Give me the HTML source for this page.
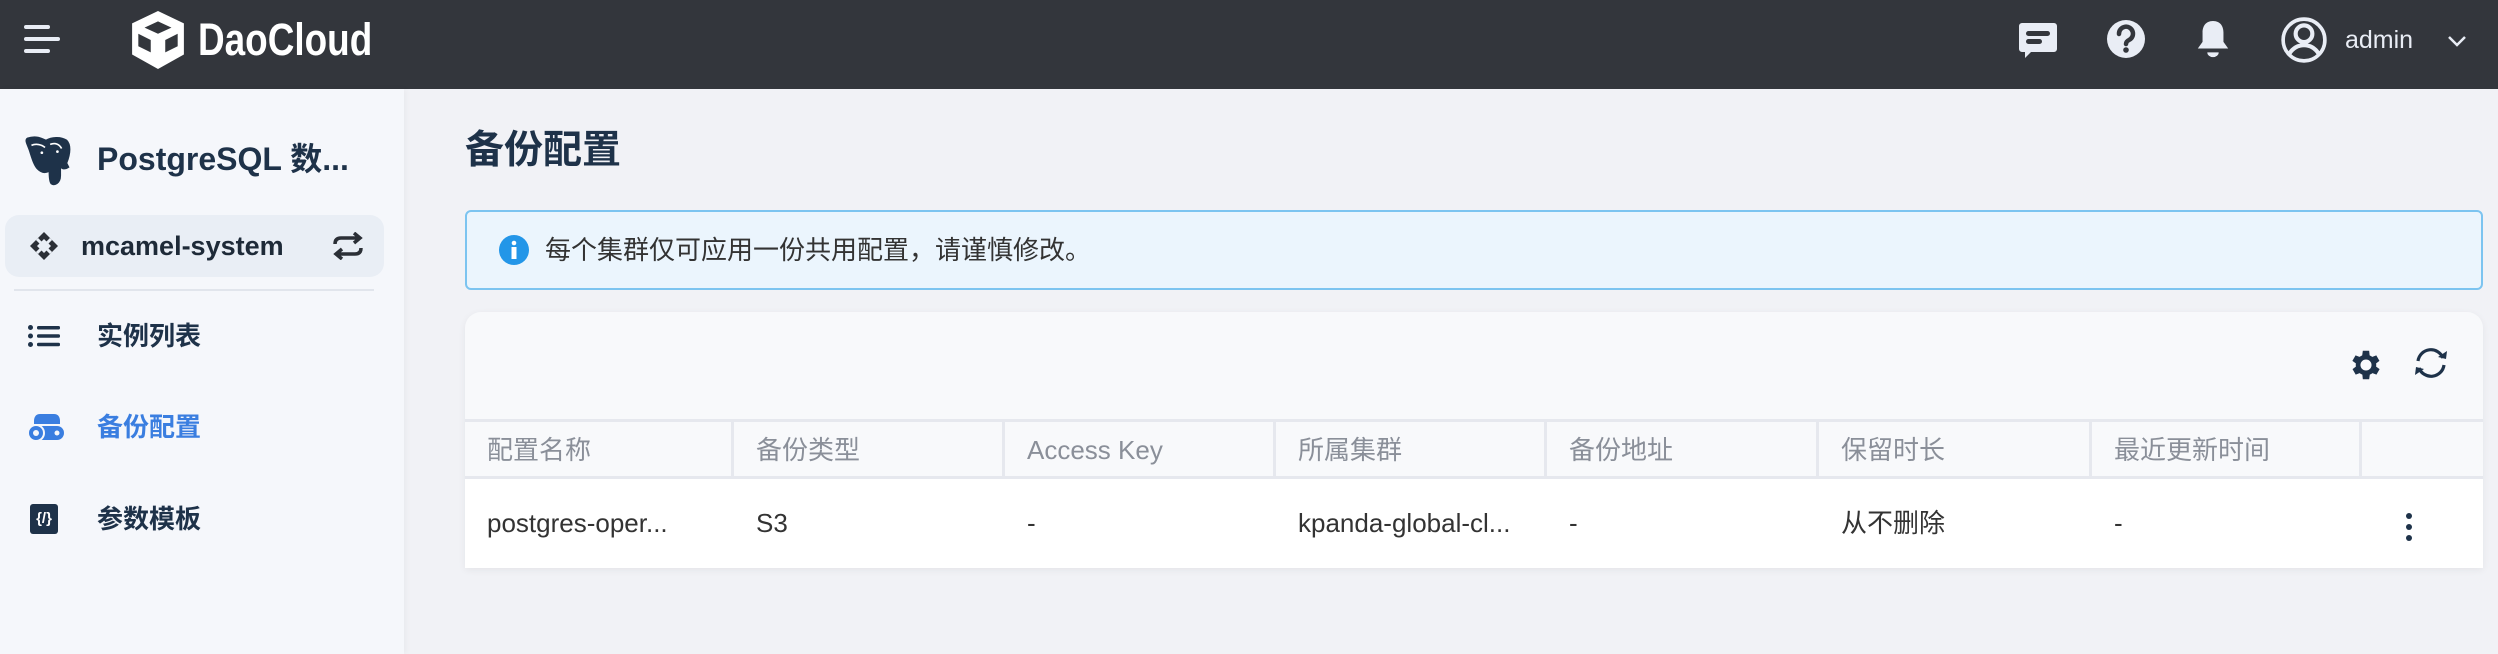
<!DOCTYPE html>
<html><head><meta charset="utf-8"><style>
*{box-sizing:border-box;margin:0;padding:0}
body{width:2498px;height:654px;overflow:hidden;background:#f1f2f6;font-family:"Liberation Sans","Noto Sans CJK SC",sans-serif;position:relative}
.abs{position:absolute}
.hdr{left:0;top:0;width:2498px;height:89px;background:#33363c}
.side{left:0;top:89px;width:404px;height:565px;background:#f5f7fb;box-shadow:2px 0 6px rgba(0,0,0,.04)}
.t{white-space:nowrap;line-height:1}
.card{left:465px;top:312px;width:2018px;height:256px;background:#f8f9fb;border-radius:16px 16px 0 0;box-shadow:0 2px 8px rgba(0,0,0,.06);overflow:hidden}
.th{top:107px;height:60px;border-top:3px solid #e6e8ee;border-bottom:3px solid #e6e8ee}
.col{position:absolute;top:0;height:100%;border-left:3px solid #e6e8ee}
</style></head><body>
<div class="abs hdr"></div>
<div class="abs" style="left:24px;top:25px;width:26px;height:4px;background:#e9edf5;border-radius:2px"></div>
<div class="abs" style="left:24px;top:37px;width:36px;height:4px;background:#e9edf5;border-radius:2px"></div>
<div class="abs" style="left:24px;top:49px;width:26px;height:4px;background:#e9edf5;border-radius:2px"></div>
<svg class="abs" style="left:130px;top:11px" width="56" height="58" viewBox="0 0 54 56"><path d="M27 0 L52 12 L52 42 L27 56 L2 42 L2 12 Z" fill="#fff"/><path d="M27 10 L40 16 L27 22 L14 16Z M8 22 L20 28 L20 40 L8 34Z M46 22 L34 28 L34 40 L46 34Z" fill="#33363c"/></svg>
<div class="abs t" style="left:198px;top:17px;font-size:45px;font-weight:bold;color:#fff;transform:scaleX(0.82);transform-origin:0 0">DaoCloud</div>
<svg class="abs" style="left:2018px;top:21px" width="40" height="40" viewBox="0 0 40 40"><path d="M4 2h32a3 3 0 0 1 3 3v23a3 3 0 0 1-3 3H13l-6 6v-6H4a3 3 0 0 1-3-3V5a3 3 0 0 1 3-3z" fill="#e9edf5"/><rect x="8" y="10" width="24" height="5" rx="2.5" fill="#33363c"/><rect x="8" y="18" width="16" height="5" rx="2.5" fill="#33363c"/></svg>
<svg class="abs" style="left:2106px;top:19px" width="40" height="40" viewBox="0 0 40 40"><circle cx="20" cy="20" r="19" fill="#e9edf5"/><path d="M13 15a7 7 0 1 1 10 6c-2 1-3 2-3 4" stroke="#33363c" stroke-width="4.5" fill="none" stroke-linecap="round"/><circle cx="20" cy="31" r="2.8" fill="#33363c"/></svg>
<svg class="abs" style="left:2194px;top:18px" width="38" height="44" viewBox="0 0 40 44"><path d="M20 2c8 0 11 6 11 12v10l5 7H4l5-7V14C9 8 12 2 20 2z" fill="#e9edf5"/><path d="M14 35a6 5 0 0 0 12 0z" fill="#e9edf5"/></svg>
<svg class="abs" style="left:2281px;top:16px" width="46" height="48" viewBox="0 0 44 46"><circle cx="22" cy="23" r="20" fill="none" stroke="#e9edf5" stroke-width="3.5"/><circle cx="22" cy="17" r="8" fill="none" stroke="#e9edf5" stroke-width="4"/><path d="M8 36c4-6 9-8 14-8s10 2 14 8" fill="none" stroke="#e9edf5" stroke-width="4"/></svg>
<div class="abs t" style="left:2345px;top:28px;font-size:25px;color:#e9edf5">admin</div>
<svg class="abs" style="left:2447px;top:34px" width="20" height="14" viewBox="0 0 20 14"><path d="M2 3l8 8 8-8" stroke="#e9edf5" stroke-width="2.5" fill="none"/></svg>

<div class="abs side"></div>
<svg class="abs" style="left:19px;top:134px" width="54" height="54" viewBox="0 0 52 50"><path d="M8 3c8-3 14 0 18 2 5-3 14-4 20 0 4 4 4 12 0 22l2 4c-3 2-6 2-8 0v8c0 8-6 10-9 8-2-2-2-8-2-12-4 2-8 1-11-2-4-4-6-12-8-18C8 9 5 5 8 3z" fill="#1e3249" stroke="#1e3249" stroke-width="1"/><path d="M12 10c4-2 10-1 13 2M30 9c5-2 9 0 11 4" stroke="#fff" stroke-width="1.6" fill="none"/><circle cx="22" cy="17" r="1.3" fill="#fff"/><circle cx="37" cy="16" r="1.3" fill="#fff"/></svg>
<div class="abs t" style="left:97px;top:143px;font-size:32px;font-weight:bold;color:#1e3249">PostgreSQL 数...</div>
<div class="abs" style="left:5px;top:215px;width:379px;height:62px;background:#e9eef5;border-radius:14px"></div>
<svg class="abs" style="left:28px;top:231px" width="32" height="30" viewBox="0 0 32 30"><path d="M16 1L30 15 16 29 2 15Z" fill="#2b2f36"/><path d="M16 8L23 15 16 22 9 15Z" fill="#e9eef5"/><path d="M9 8l14 14M23 8L9 22" stroke="#e9eef5" stroke-width="3"/></svg>
<div class="abs t" style="left:81px;top:233px;font-size:27px;font-weight:bold;color:#1e2a38">mcamel-system</div>
<svg class="abs" style="left:332px;top:232px" width="32" height="28" viewBox="0 0 32 28"><path d="M3 12c0-4 2-6 6-6h18M22 1l6 5-6 5M29 16c0 4-2 6-6 6H5M10 27l-6-5 6-5" stroke="#2b2f36" stroke-width="3.5" fill="none"/></svg>
<div class="abs" style="left:14px;top:289px;width:360px;height:2px;background:#e1e5ec"></div>
<svg class="abs" style="left:28px;top:325px" width="32" height="22" viewBox="0 0 32 22"><circle cx="2.5" cy="2.5" r="2.5" fill="#1e3249"/><circle cx="2.5" cy="11" r="2.5" fill="#1e3249"/><circle cx="2.5" cy="19.5" r="2.5" fill="#1e3249"/><rect x="9" y="1" width="23" height="3.5" rx="1.5" fill="#1e3249"/><rect x="9" y="9.3" width="23" height="3.5" rx="1.5" fill="#1e3249"/><rect x="9" y="17.7" width="23" height="3.5" rx="1.5" fill="#1e3249"/></svg>
<div class="abs t" style="left:97px;top:323px;font-size:26px;font-weight:bold;color:#1e3249">实例列表</div>
<svg class="abs" style="left:26px;top:413px" width="38" height="30" viewBox="0 0 38 30"><path d="M8 8c0-4 2-7 6-7h14c4 0 6 3 6 7v3H8z" fill="#3a7ee0"/><rect x="6" y="13" width="32" height="14" rx="7" fill="#3a7ee0"/><circle cx="31" cy="20" r="2.5" fill="#f5f7fb"/><circle cx="10" cy="20" r="8" fill="#3a7ee0" stroke="#f5f7fb" stroke-width="2"/><circle cx="10" cy="20" r="3" fill="#f5f7fb"/></svg>
<div class="abs t" style="left:97px;top:414px;font-size:26px;font-weight:bold;color:#3a7ee0">备份配置</div>
<div class="abs" style="left:30px;top:504px;width:28px;height:30px;background:#1e3249;border-radius:3px;color:#fff;font-size:15px;font-weight:bold;line-height:30px;text-align:center">{/}</div>
<div class="abs t" style="left:97px;top:506px;font-size:26px;font-weight:bold;color:#1e3249">参数模板</div>

<div class="abs t" style="left:465px;top:131px;font-size:39px;font-weight:bold;color:#1e3249">备份配置</div>
<div class="abs" style="left:465px;top:210px;width:2018px;height:80px;background:#ebf5fd;border:2px solid #7cc4f0;border-radius:6px"></div>
<svg class="abs" style="left:499px;top:235px" width="30" height="30" viewBox="0 0 30 30"><circle cx="15" cy="15" r="15" fill="#2396e8"/><circle cx="15" cy="8" r="2.3" fill="#fff"/><rect x="12.5" y="12" width="5" height="12" fill="#fff"/></svg>
<div class="abs t" style="left:545px;top:237px;font-size:26px;color:#333">每个集群仅可应用一份共用配置，请谨慎修改。</div>

<div class="abs card">
<svg class="abs" style="left:1882px;top:34px" width="38" height="38" viewBox="0 0 24 24"><path fill="#1e3249" d="M19.4 13a7.5 7.5 0 0 0 0-2l2.1-1.6-2-3.5-2.5 1a7 7 0 0 0-1.7-1L15 3h-4l-.4 2.9a7 7 0 0 0-1.7 1l-2.5-1-2 3.5L6.6 11a7.5 7.5 0 0 0 0 2l-2.1 1.6 2 3.5 2.5-1a7 7 0 0 0 1.7 1L11 21h4l.4-2.9a7 7 0 0 0 1.7-1l2.5 1 2-3.5zM13 15.5a3.5 3.5 0 1 1 0-7 3.5 3.5 0 0 1 0 7z" transform="translate(-1 0)"/></svg>
<svg class="abs" style="left:1947px;top:34px" width="38" height="34" viewBox="0 0 38 34"><path d="M6 15A13 13 0 0 1 31 12M32 19A13 13 0 0 1 7 22" stroke="#1e3249" stroke-width="3.2" fill="none"/><path d="M26 11l8 2 1-8z M12 23l-8-2-1 8z" fill="#1e3249"/></svg>
<div class="abs th" style="left:0;width:2018px">
<div class="col" style="left:266px"></div><div class="col" style="left:537px"></div><div class="col" style="left:808px"></div><div class="col" style="left:1079px"></div><div class="col" style="left:1351px"></div><div class="col" style="left:1624px"></div><div class="col" style="left:1894px"></div>
<div class="abs t" style="left:22px;top:15px;font-size:26px;color:#8a8f99">配置名称</div>
<div class="abs t" style="left:291px;top:15px;font-size:26px;color:#8a8f99">备份类型</div>
<div class="abs t" style="left:562px;top:15px;font-size:26px;color:#8a8f99">Access Key</div>
<div class="abs t" style="left:833px;top:15px;font-size:26px;color:#8a8f99">所属集群</div>
<div class="abs t" style="left:1104px;top:15px;font-size:26px;color:#8a8f99">备份地址</div>
<div class="abs t" style="left:1376px;top:15px;font-size:26px;color:#8a8f99">保留时长</div>
<div class="abs t" style="left:1649px;top:15px;font-size:26px;color:#8a8f99">最近更新时间</div>
</div>
<div class="abs" style="left:0;top:167px;width:2018px;height:89px;background:#fff">
<div class="abs t" style="left:22px;top:31px;font-size:26px;color:#333">postgres-oper...</div>
<div class="abs t" style="left:291px;top:31px;font-size:26px;color:#333">S3</div>
<div class="abs t" style="left:562px;top:31px;font-size:26px;color:#333">-</div>
<div class="abs t" style="left:833px;top:31px;font-size:26px;color:#333">kpanda-global-cl...</div>
<div class="abs t" style="left:1104px;top:31px;font-size:26px;color:#333">-</div>
<div class="abs t" style="left:1376px;top:31px;font-size:26px;color:#333">从不删除</div>
<div class="abs t" style="left:1649px;top:31px;font-size:26px;color:#333">-</div>
<div class="abs" style="left:1941px;top:34px;width:6px;height:6px;border-radius:3px;background:#1e3249;box-shadow:0 11px 0 #1e3249,0 22px 0 #1e3249"></div>
</div>
</div>
</body></html>
